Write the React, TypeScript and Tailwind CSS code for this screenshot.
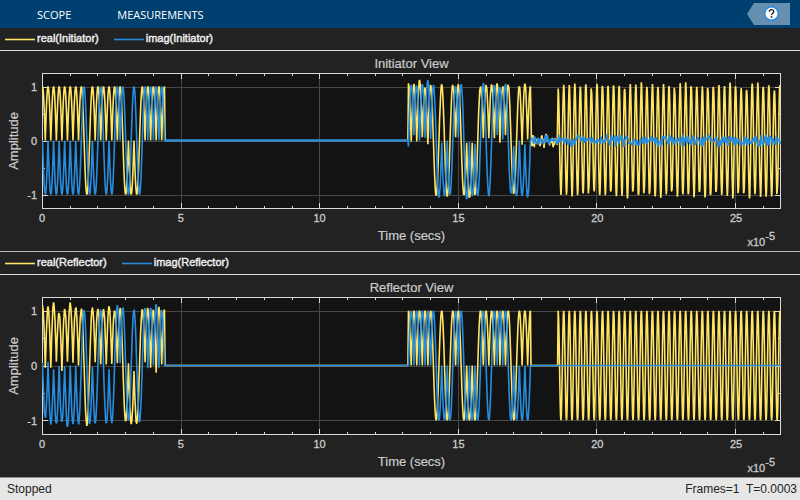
const FONT = "font-['Liberation_Sans',Arial,sans-serif]";

const X_MAX = 26.62;
const W = 739;
const YELLOW = '#ffe562';
const BLUE = '#268de0';

// Phase-modulated burst: real part peaks on even symbols, imaginary on odd ones.
const FIRST_RE = '++++++++-++++++---+++++';
const FIRST_IM = '-------+--+--++-+-++++';
const SECOND_RE = '+++++-+-++---++++++-+++';
const SECOND_IM = '+++++---++---+-+++----';

const FIRST_PEAKS_RE = [
  1.1, -0.04, 1.08, -0.04, 1.15, 0.07, 0.95, -0.1, 1.03, 0.07, 1.15, 0.05, 1.05, 0, 1.03, 0, -1.1, 0, 1.06, 0.06, 1.03, 0.02,
  1.03, 0.02, 1.08, 0.03, 0.99, 0.04, 1.04, 0, -1.01, 0.04, -1.07, -0.1, -1.06, 0, 1.02, 0.06, 1.04, -0.04, 1.01, -0.13, 1.07,
  0.02, 1.01,
];
const FIRST_PEAKS_IM = [
  0.05, -0.95, 0.07, -1.08, -0.07, -1.05, -0.01, -1.02, -0.01, -1.12, 0, -1.07, 0, -1.07, 0, 1, 0, -1.07, -0.03, -1.05, 0, 1.01,
  0, -1.05, -0.07, -1.05, 0, 1.1, 0.04, 1.05, 0, -1, 0, 1.01, 0, -1.02, 0, 1.04, -0.05, 1.04, 0, 1.12, -0.04, 1.01, 0,
];
const SECOND_PEAKS_RE = [
  1.06, -0.02, 1.05, -0.02, 1.12, 0.06, 0.96, -0.07, 1.02, 0, -1.01, 0, 1.04, 0, -1.04, 0, 1.02, 0.06, 1.04, 0, -1, -0.04, -1.05,
  -0.04, -1, 0, 1, 0.04, 1.03, 0.04, 1.03, 0.04, 1.05, -0.04, 0.99, 0.1, 1.02, 0, -0.98, 0, 1, -0.08, 1.05, 0.02, 1,
];
const SECOND_PEAKS_IM = [
  -0.11, 1.03, 0.1, 1, 0, 1.03, 0.05, 1.12, 0.03, 1.02, 0, -1.05, -0.04, -1.03, 0, -1, 0, 1, 0.05, 1.04, 0, -1.08, -0.03, -1.03,
  -0.06, -1.02, 0, 1.06, 0, -1.02, 0, 1.02, 0.1, 0.99, 0.02, 1.05, 0, -0.98, -0.1, -1.03, 0, -1.03, -0.07, -1.05, 0,
];

type Point = [number, number];

function noise(seed: number) {
  let s = seed;
  return () => {
    s = (s * 1664525 + 1013904223) % 4294967296;
    return (s / 4294967296) * 2 - 1;
  };
}

function burst(start: number, signs: string, parity: 0 | 1, peaks?: number[]): Point[] {
  const rnd = noise(start * 10 + parity + 5);
  const level = (k: number) => (k % 2 === parity ? (signs[(k - parity) / 2] === '+' ? 1 : -1) : 0);
  const points: Point[] = [];
  const steps = 8;
  for (let i = 0; i <= 44 * steps; i++) {
    const k = Math.min(Math.floor(i / steps), 43);
    const f = i / steps - k;
    let y = level(k) * Math.cos((f * Math.PI) / 2) + level(k + 1) * Math.sin((f * Math.PI) / 2);
    if (peaks) {
      const e0 = peaks[k] - level(k);
      const e1 = peaks[k + 1] - level(k + 1);
      y += e0 * (1 - f) + e1 * f + (f > 0 && f < 1 ? rnd() * 0.03 : 0);
    }
    points.push([start + i / steps / 10, y]);
  }
  return points;
}

function tone(noisy: boolean): Point[] {
  const rnd = noise(77);
  const points: Point[] = [];
  let amp = 1;
  for (let i = 0; i <= 640; i++) {
    const t = i / 80;
    if (i % 4 === 0 && noisy) amp = 1 + rnd() * 0.08;
    points.push([18.6 + t, amp * Math.cos(t * 10 * Math.PI)]);
  }
  return points;
}

function hiss(from: number, to: number, size: number, seed: number): Point[] {
  const rnd = noise(seed);
  const points: Point[] = [];
  for (let t = from; t < to; t += 0.025) points.push([t, (rnd() + rnd()) * size]);
  return points;
}

const flat = (a: number, b: number): Point[] => [
  [a, 0],
  [b, 0],
];

const initiatorReal = [
  ...burst(0, FIRST_RE, 0),
  ...flat(4.42, 13.18),
  ...burst(13.2, SECOND_RE, 0, SECOND_PEAKS_RE),
  ...hiss(17.64, 18.58, 0.09, 11),
  ...tone(true),
];
const initiatorImag = [
  ...burst(0, FIRST_IM, 1),
  ...flat(4.42, 13.18),
  ...burst(13.2, SECOND_IM, 1, SECOND_PEAKS_IM),
  ...hiss(17.62, X_MAX, 0.065, 29),
];
const reflectorReal = [
  ...burst(0, FIRST_RE, 0, FIRST_PEAKS_RE),
  ...flat(4.42, 13.18),
  ...burst(13.2, SECOND_RE, 0),
  ...flat(17.62, 18.58),
  ...tone(false),
];
const reflectorImag = [
  ...burst(0, FIRST_IM, 1, FIRST_PEAKS_IM),
  ...flat(4.42, 13.18),
  ...burst(13.2, SECOND_IM, 1),
  ...flat(17.62, X_MAX),
];

function Plot({ real, imag, height, zeroWidth }: { real: Point[]; imag: Point[]; height: number; zeroWidth: number }) {
  const px = (t: number) => (t / X_MAX) * (W - 1) + 0.5;
  const mid = height / 2;
  const unit = (height - 1) / 2.5;
  const path = (points: Point[]) =>
    'M' +
    points
      .filter((p) => p[0] <= X_MAX)
      .map(([t, y]) => `${px(t).toFixed(2)} ${(mid - 0.5 - y * unit).toFixed(2)}`)
      .join('L');
  const snap = (v: number) => Math.floor(v) + 0.5;
  const xs = Array.from({ length: 26 }, (_, i) => i + 1);
  return (
    <svg
      className="block h-full w-full"
      viewBox={`0 0 ${W} ${height}`}
      preserveAspectRatio="none"
      fill="none"
      role="img"
      aria-label="Amplitude over time"
    >
      <rect width={W} height={height} fill="#131313" />
      <g stroke="#474747">
        {[5, 10, 15, 20, 25].map((t) => (
          <path key={t} d={`M${snap(px(t))} 1V${height - 1}`} />
        ))}
        {[-1, 0, 1].map((y) => (
          <path key={y} d={`M1 ${snap(mid - y * unit)}H${W - 1}`} />
        ))}
      </g>
      <g stroke="#d9d9d9">
        {xs.map((t) => {
          const len = t % 5 === 0 ? 6 : 3;
          return <path key={t} d={`M${snap(px(t))} 0v${len}M${snap(px(t))} ${height}v-${len}`} />;
        })}
        {[-1, -0.5, 0, 0.5, 1].map((y) => {
          const len = y % 1 === 0 ? 6 : 3;
          return <path key={y} d={`M0 ${snap(mid - y * unit)}h${len}M${W} ${snap(mid - y * unit)}h-${len}`} />;
        })}
        <rect x="0.5" y="0.5" width={W - 1} height={height - 1} />
      </g>
      <g strokeLinejoin="bevel" strokeWidth="1.6">
        <path d={path(real)} stroke={YELLOW} />
        <path d={path(imag)} stroke={BLUE} />
      </g>
      {zeroWidth > 1 && (
        <path d={`M${px(4.4)} ${mid - 0.5}H${px(13.2)}`} stroke={BLUE} strokeWidth={zeroWidth} />
      )}
    </svg>
  );
}

function LegendItem({ label, color }: { label: string; color: string }) {
  return (
    <div className="flex items-center gap-[2px]">
      <svg className="mt-[2px] block h-[3px] w-[30px]" viewBox="0 0 30 3" aria-hidden="true">
        <path d="M0 1.5H30" stroke={color} strokeWidth="1.6" />
      </svg>
      <span className="[-webkit-text-stroke:0.4px_#f2f2f2]">{label}</span>
    </div>
  );
}

function Legend({ name }: { name: string }) {
  return (
    <div className="flex h-[23px] items-center gap-[15px] border-b border-[#d9d9d9] pb-[2px] pl-[5px] text-[11px] leading-3 text-[#f2f2f2]">
      <LegendItem label={`real(${name})`} color={YELLOW} />
      <LegendItem label={`imag(${name})`} color={BLUE} />
    </div>
  );
}

const X_TICKS = [
  { label: '0', span: 5 },
  { label: '5', span: 5 },
  { label: '10', span: 5 },
  { label: '15', span: 5 },
  { label: '20', span: 5 },
  { label: '25', span: 1.62 },
];

function Panel(props: { name: string; real: Point[]; imag: Point[]; height: number; zeroWidth: number; divided?: boolean }) {
  const yLabel = (text: string) => (
    <div className="flex h-0 items-center justify-end pr-[5px]">{text}</div>
  );
  return (
    <section className={`flex min-h-0 flex-col text-[#cccccc] ${props.divided ? 'border-t border-[#b8b8b8]' : ''}`}>
      <Legend name={props.name} />
      <div className="grid min-h-0 flex-1 grid-cols-[28px_14px_minmax(0,1fr)_19px] grid-rows-[22px_minmax(0,1fr)_42px]">
        <h2 className="col-start-3 row-start-1 pt-[5px] text-center text-[13px] leading-4 [-webkit-text-stroke:0.2px_#cccccc]">
          {props.name} View
        </h2>
        <div className="col-start-1 row-start-2 flex items-center justify-center">
          <span className="rotate-180 text-[13px] leading-4 [-webkit-text-stroke:0.2px_#cccccc] [writing-mode:vertical-rl]">
            Amplitude
          </span>
        </div>
        <div className="col-start-2 row-start-2 flex flex-col text-[11px] leading-3 [-webkit-text-stroke:0.3px_#cccccc]">
          <div className="grow" />
          {yLabel('1')}
          <div className="grow-4" />
          {yLabel('0')}
          <div className="grow-4" />
          {yLabel('-1')}
          <div className="grow" />
        </div>
        <div className="col-start-3 row-start-2 min-h-0">
          <Plot real={props.real} imag={props.imag} height={props.height} zeroWidth={props.zeroWidth} />
        </div>
        <div className="col-start-3 row-start-3">
          <div className="flex pt-[3px] text-[11px] leading-3 [-webkit-text-stroke:0.3px_#cccccc]">
            {X_TICKS.map((t) => (
              <div key={t.label} className="flex w-0" style={{ flexGrow: t.span }}>
                <span className="flex w-0 justify-center">{t.label}</span>
              </div>
            ))}
          </div>
          <div className="grid grid-cols-[1fr_auto_1fr] pt-[4px]">
            <span className="col-start-2 text-[13px] leading-4 [-webkit-text-stroke:0.2px_#cccccc]">Time (secs)</span>
            <span className="justify-self-end pt-[8px] pr-[6px] text-[11px] leading-3 [-webkit-text-stroke:0.3px_#cccccc]">
              x10<sup className="-top-[6px] text-[11px]">-5</sup>
            </span>
          </div>
        </div>
      </div>
    </section>
  );
}

export default function App() {
  return (
    <div className={`flex h-screen flex-col overflow-hidden bg-[#222222] ${FONT}`}>
      <header className="flex h-7 shrink-0 items-center bg-[#004071] pr-[10px] pl-[37px] font-['Open_Sans','Noto_Sans',sans-serif] text-[11px] leading-4 text-white">
        <nav className="flex flex-1 gap-[46px] pt-[2px]">
          <button type="button">SCOPE</button>
          <button type="button">MEASUREMENTS</button>
        </nav>
        <button type="button" aria-label="Help">
          <svg className="block h-[22px] w-[43px]" viewBox="0 0 43 22">
            <path d="M0 11L7 0H43V22H7Z" fill="#6790b0" />
            <circle cx="24.5" cy="10.5" r="6.7" fill="#ffffff" stroke="#268de0" strokeWidth="1.4" />
            <path
              d="M22.3 8.8C22.3 7.2 23.2 6.6 24.5 6.6S26.7 7.4 26.7 8.6C26.7 10.3 24.6 10.3 24.6 12.1"
              fill="none"
              stroke="#222222"
              strokeWidth="1.4"
            />
            <rect x="23.8" y="13.2" width="1.6" height="1.6" fill="#222222" />
          </svg>
        </button>
      </header>
      <main className="grid min-h-0 flex-1 grid-rows-[minmax(0,223fr)_minmax(0,226fr)]">
        <Panel name="Initiator" real={initiatorReal} imag={initiatorImag} height={136} zeroWidth={2} />
        <Panel name="Reflector" real={reflectorReal} imag={reflectorImag} height={138} zeroWidth={1} divided />
      </main>
      <footer className="flex h-[23px] shrink-0 items-center justify-between border-t border-[#8c8c8c] bg-[#e6e6e6] pr-[3px] pl-[7px] text-[12px] leading-4 text-[#222222]">
        <span>Stopped</span>
        <span className="whitespace-pre">Frames=1  T=0.0003</span>
      </footer>
    </div>
  );
}
